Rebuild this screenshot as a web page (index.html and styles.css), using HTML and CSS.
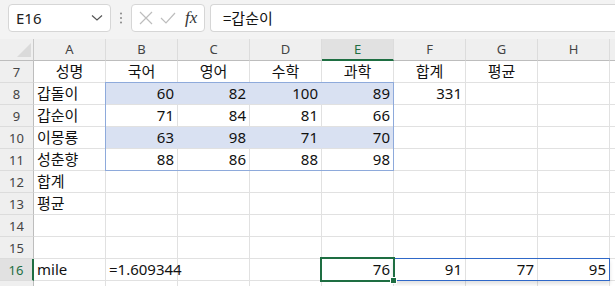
FILE: index.html
```html
<!DOCTYPE html>
<html lang="ko">
<head>
    <meta charset="UTF-8">
    <title>Sheet</title>
    <link rel="stylesheet" href="styles.css">
</head>
<body>
    <div class="toolbar">
        <div class="namebox">
            <span>E16</span>
            <svg width="12" height="8" viewBox="0 0 12 8"><path d="M1 1.5 L6 6 L11 1.5" fill="none" stroke="#555" stroke-width="1.2"/></svg>
        </div>
        <div class="grip">
            <svg width="4" height="12" viewBox="0 0 4 12"><circle cx="2" cy="1.5" r="1" fill="#888"/><circle cx="2" cy="6" r="1" fill="#888"/><circle cx="2" cy="10.5" r="1" fill="#888"/></svg>
        </div>
        <div class="fxbox">
            <svg width="14" height="14" viewBox="0 0 14 14"><path d="M1 1 L13 13 M13 1 L1 13" stroke="#bdbdbd" stroke-width="1.2"/></svg>
            <svg width="16" height="12" viewBox="0 0 16 12"><path d="M1 6 L6 11 L15 1" fill="none" stroke="#bdbdbd" stroke-width="1.2"/></svg>
            <span class="fx">fx</span>
        </div>
        <div class="formula">=갑순이</div>
    </div>

    <div class="sheet-wrap">
    <div class="sheet">
        <div class="corner"><div class="tri"></div></div>
        <div class="h">A</div>
        <div class="h">B</div>
        <div class="h">C</div>
        <div class="h">D</div>
        <div class="h sel">E</div>
        <div class="h">F</div>
        <div class="h">G</div>
        <div class="h">H</div>
        <div class="h"></div>

        <div class="r">7</div>
        <div class="c ctr">성명</div>
        <div class="c ctr">국어</div>
        <div class="c ctr">영어</div>
        <div class="c ctr">수학</div>
        <div class="c ctr">과학</div>
        <div class="c ctr">합계</div>
        <div class="c ctr">평균</div>
        <div class="c"></div>
        <div class="c"></div>

        <div class="r">8</div>
        <div class="c">갑돌이</div>
        <div class="c num band">60</div>
        <div class="c num band">82</div>
        <div class="c num band">100</div>
        <div class="c num band">89</div>
        <div class="c num">331</div>
        <div class="c"></div>
        <div class="c"></div>
        <div class="c"></div>

        <div class="r">9</div>
        <div class="c">갑순이</div>
        <div class="c num">71</div>
        <div class="c num">84</div>
        <div class="c num">81</div>
        <div class="c num">66</div>
        <div class="c"></div>
        <div class="c"></div>
        <div class="c"></div>
        <div class="c"></div>

        <div class="r">10</div>
        <div class="c">이몽룡</div>
        <div class="c num band">63</div>
        <div class="c num band">98</div>
        <div class="c num band">71</div>
        <div class="c num band">70</div>
        <div class="c"></div>
        <div class="c"></div>
        <div class="c"></div>
        <div class="c"></div>

        <div class="r">11</div>
        <div class="c">성춘향</div>
        <div class="c num">88</div>
        <div class="c num">86</div>
        <div class="c num">88</div>
        <div class="c num">98</div>
        <div class="c"></div>
        <div class="c"></div>
        <div class="c"></div>
        <div class="c"></div>

        <div class="r">12</div>
        <div class="c">합계</div>
        <div class="c"></div>
        <div class="c"></div>
        <div class="c"></div>
        <div class="c"></div>
        <div class="c"></div>
        <div class="c"></div>
        <div class="c"></div>
        <div class="c"></div>

        <div class="r">13</div>
        <div class="c">평균</div>
        <div class="c"></div>
        <div class="c"></div>
        <div class="c"></div>
        <div class="c"></div>
        <div class="c"></div>
        <div class="c"></div>
        <div class="c"></div>
        <div class="c"></div>

        <div class="r">14</div>
        <div class="c"></div>
        <div class="c"></div>
        <div class="c"></div>
        <div class="c"></div>
        <div class="c"></div>
        <div class="c"></div>
        <div class="c"></div>
        <div class="c"></div>
        <div class="c"></div>

        <div class="r">15</div>
        <div class="c"></div>
        <div class="c"></div>
        <div class="c"></div>
        <div class="c"></div>
        <div class="c"></div>
        <div class="c"></div>
        <div class="c"></div>
        <div class="c"></div>
        <div class="c"></div>

        <div class="r sel">16</div>
        <div class="c">mile</div>
        <div class="c over">=1.609344</div>
        <div class="c"></div>
        <div class="c"></div>
        <div class="c num">76</div>
        <div class="c num">91</div>
        <div class="c num">77</div>
        <div class="c num">95</div>
        <div class="c"></div>

        <div class="r">17</div>
        <div class="c"></div>
        <div class="c"></div>
        <div class="c"></div>
        <div class="c"></div>
        <div class="c"></div>
        <div class="c"></div>
        <div class="c"></div>
        <div class="c"></div>
        <div class="c"></div>
    </div>

    <!-- selection layer, same grid as the sheet -->
    <div class="layer">
        <div class="range"></div>
        <div class="refs"></div>
        <div class="active"><div class="handle"></div></div>
    </div>
    </div>
</body>
</html>
```

FILE: styles.css
```css
body {
    margin: 0;
    background: #f3f3f3;
    font-family: "Noto Sans", "Noto Sans CJK KR", sans-serif;
    overflow: hidden;
}
.toolbar {
    height: 39px;
    display: flex;
    align-items: flex-start;
    padding: 4px 0 0 8px;
    box-sizing: border-box;
}
.namebox {
    width: 103px;
    height: 28px;
    box-sizing: border-box;
    background: #fff;
    border: 1px solid #d6d6d6;
    border-radius: 4px;
    display: flex;
    align-items: center;
    justify-content: space-between;
    padding: 0 7px 0 7px;
    font-size: 15px;
    color: #222;
}
.grip {
    width: 20px;
    height: 28px;
    display: flex;
    align-items: center;
    justify-content: center;
}
.fxbox {
    width: 74px;
    height: 28px;
    box-sizing: border-box;
    background: #fff;
    border: 1px solid #d6d6d6;
    border-radius: 4px;
    display: flex;
    align-items: center;
    gap: 7px;
    padding-left: 7px;
}
.fx {
    font-family: "Liberation Serif", serif;
    font-style: italic;
    font-size: 17px;
    color: #333;
    margin-left: 2px;
}
.formula {
    flex: 1;
    margin-left: 5px;
    height: 28px;
    box-sizing: border-box;
    background: #fff;
    border: 1px solid #d6d6d6;
    border-right: none;
    border-radius: 4px 0 0 4px;
    font-family: "Noto Sans CJK KR", sans-serif;
    font-size: 15px;
    line-height: 25px;
    padding-left: 12px;
    color: #111;
}

.sheet-wrap {
    display: grid;
}
.sheet,
.layer {
    grid-area: 1 / 1;
    display: grid;
    grid-template-columns: 34px repeat(8, 72px) 1fr;
    grid-template-rows: repeat(12, 22px);
}
.sheet {
    background: #fff;
    font-size: 15px;
    color: #111;
}
.layer {
    pointer-events: none;
}
.sheet > div,
.layer > div {
    box-sizing: border-box;
}
.corner {
    background: #efefef;
    border-right: 1px solid #c8c8c8;
    border-bottom: 1px solid #bdbdbd;
    position: relative;
}
.tri {
    position: absolute;
    right: 2px;
    bottom: 3px;
    width: 0;
    height: 0;
    border-left: 14px solid transparent;
    border-bottom: 14px solid #dadada;
}
.h {
    background: #efefef;
    border-right: 1px solid #dcdcdc;
    border-bottom: 1px solid #bdbdbd;
    text-align: center;
    font-size: 13px;
    line-height: 21px;
    color: #444;
}
.h.sel {
    background: #e1e1e1;
    color: #1e6e42;
    border-bottom: 2px solid #1e6e42;
}
.r {
    background: #efefef;
    border-right: 1px solid #bdbdbd;
    border-bottom: 1px solid #dcdcdc;
    text-align: center;
    font-size: 13px;
    line-height: 22px;
    color: #444;
}
.r.sel {
    background: #e1e1e1;
    color: #1e6e42;
    border-right: 2px solid #1e6e42;
}
.c {
    border-right: 1px solid #e1e1e1;
    border-bottom: 1px solid #e1e1e1;
    line-height: 21px;
    padding: 0 3px;
    white-space: nowrap;
}
.ctr {
    text-align: center;
}
.num {
    text-align: right;
}
.band {
    background: #d9e1f2;
    border-right-color: #d9e1f2;
}
.over {
    overflow: visible;
}

.range {
    grid-area: 3 / 3 / 7 / 7;
    margin: -1px 0 0 -1px;
    border: 1px solid #8eaadb;
}
.refs {
    grid-area: 11 / 7 / 12 / 10;
    margin: -1px 0 0 -1px;
    border: 1px solid #2f68c8;
    box-shadow: 0 3px 4px rgba(0, 0, 0, 0.12);
}
.active {
    grid-area: 11 / 6 / 12 / 7;
    margin: -2px -1px -1px -2px;
    border: 2px solid #1e6e42;
    position: relative;
}
.handle {
    position: absolute;
    right: -4px;
    bottom: -4px;
    width: 5px;
    height: 5px;
    background: #1e6e42;
    border: 1px solid #fff;
}
```
